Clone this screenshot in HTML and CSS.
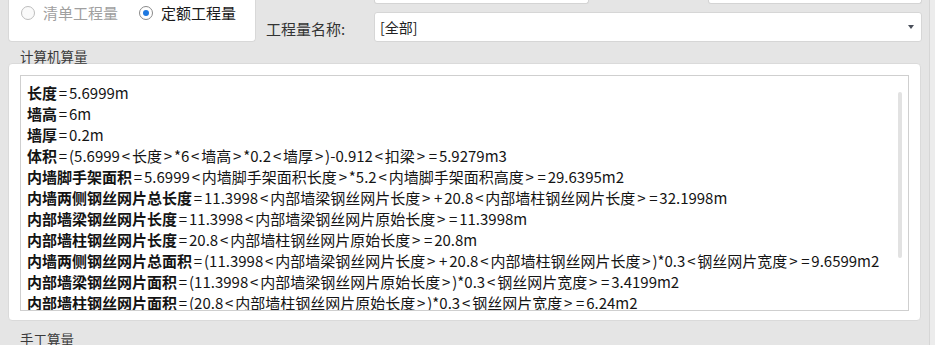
FILE: index.html
```html
<!DOCTYPE html>
<html lang="zh-CN">
<head>
    <meta charset="UTF-8">
    <title>工程量计算</title>
    <link rel="stylesheet" href="styles.css">
</head>
<body>
<div class="page">

    <div class="header">
        <div class="mode-panel">
            <span class="radio disabled"><span class="radio-dot"></span>清单工程量</span>
            <span class="radio checked"><span class="radio-dot"></span>定额工程量</span>
        </div>
        <div class="filters">
            <div class="stub-row">
                <div class="field-stub first"></div>
                <div class="field-stub second"></div>
            </div>
            <div class="filter-row">
                <span class="filter-label">工程量名称:</span>
                <div class="combo">
                    <span>[全部]</span>
                    <span class="combo-arrow"></span>
                </div>
            </div>
        </div>
    </div>

    <div class="group-title">计算机算量</div>
    <div class="group-panel">
        <div class="calc-box">
            <!-- operators get their own span: the original font draws < > = + wide -->
            <div class="calc-lines">
                <div><b>长度</b><i>=</i>5.6999m</div>
                <div><b>墙高</b><i>=</i>6m</div>
                <div><b>墙厚</b><i>=</i>0.2m</div>
                <div><b>体积</b><i>=</i>(5.6999<i>&lt;</i>长度<i>&gt;</i>*6<i>&lt;</i>墙高<i>&gt;</i>*0.2<i>&lt;</i>墙厚<i>&gt;</i>)-0.912<i>&lt;</i>扣梁<i>&gt;</i><i>=</i>5.9279m3</div>
                <div><b>内墙脚手架面积</b><i>=</i>5.6999<i>&lt;</i>内墙脚手架面积长度<i>&gt;</i>*5.2<i>&lt;</i>内墙脚手架面积高度<i>&gt;</i><i>=</i>29.6395m2</div>
                <div><b>内墙两侧钢丝网片总长度</b><i>=</i>11.3998<i>&lt;</i>内部墙梁钢丝网片长度<i>&gt;</i><i>+</i>20.8<i>&lt;</i>内部墙柱钢丝网片长度<i>&gt;</i><i>=</i>32.1998m</div>
                <div><b>内部墙梁钢丝网片长度</b><i>=</i>11.3998<i>&lt;</i>内部墙梁钢丝网片原始长度<i>&gt;</i><i>=</i>11.3998m</div>
                <div><b>内部墙柱钢丝网片长度</b><i>=</i>20.8<i>&lt;</i>内部墙柱钢丝网片原始长度<i>&gt;</i><i>=</i>20.8m</div>
                <div><b>内墙两侧钢丝网片总面积</b><i>=</i>(11.3998<i>&lt;</i>内部墙梁钢丝网片长度<i>&gt;</i><i>+</i>20.8<i>&lt;</i>内部墙柱钢丝网片长度<i>&gt;</i>)*0.3<i>&lt;</i>钢丝网片宽度<i>&gt;</i><i>=</i>9.6599m2</div>
                <div><b>内部墙梁钢丝网片面积</b><i>=</i>(11.3998<i>&lt;</i>内部墙梁钢丝网片原始长度<i>&gt;</i>)*0.3<i>&lt;</i>钢丝网片宽度<i>&gt;</i><i>=</i>3.4199m2</div>
                <div><b>内部墙柱钢丝网片面积</b><i>=</i>(20.8<i>&lt;</i>内部墙柱钢丝网片原始长度<i>&gt;</i>)*0.3<i>&lt;</i>钢丝网片宽度<i>&gt;</i><i>=</i>6.24m2</div>
            </div>
            <div class="scroll-thumb"></div>
        </div>
    </div>

    <div class="group-title manual">手工算量</div>
    <div class="group-panel bottom"></div>

</div>
</body>
</html>
```

FILE: styles.css
```css
html, body {
    margin: 0;
    padding: 0;
    height: 345px;
    overflow: hidden;
    background-color: #ececec;
}
body {
    font-family: "Noto Sans CJK SC", "Microsoft YaHei", sans-serif;
    font-size: 15px;
    color: #1b1b1b;
}
.page {
    width: 929px;
    height: 345px;
    border-right: 1px solid #d6d6d6;
    background-color: #e5e5e5;
}
.header {
    display: flex;
    height: 43px;
}
.mode-panel {
    margin-left: 8px;
    width: 248px;
    height: 42px;
    background: #fff;
    border: 1px solid #d8d8d8;
    border-top: none;
    border-radius: 0 0 4px 4px;
    display: flex;
    align-items: flex-start;
    gap: 21px;
    padding-left: 12px;
    box-sizing: border-box;
}
.radio {
    display: flex;
    align-items: center;
    gap: 8px;
    font-size: 15px;
    line-height: 26px;
    color: #1a1a1a;
}
.radio.disabled {
    color: #a0a0a0;
}
.radio-dot {
    width: 12px;
    height: 12px;
    border: 1px solid #bdbdbd;
    border-radius: 50%;
    background: #fafafa;
    display: flex;
    align-items: center;
    justify-content: center;
}
.radio.checked .radio-dot {
    border-color: #8a8a8a;
    background: #fff;
}
.radio.checked .radio-dot::after {
    content: "";
    width: 6px;
    height: 6px;
    border-radius: 50%;
    background: #1e78e0;
}
.filters {
    flex: 1;
    display: flex;
    flex-direction: column;
    padding-left: 10px;
}
.stub-row {
    display: flex;
    height: 12px;
    padding-left: 108px;
}
.field-stub {
    height: 3px;
    background: #fff;
    border: 1px solid #d4d4d4;
    border-top: none;
    border-radius: 0 0 3px 3px;
}
.field-stub.first {
    width: 213px;
}
.field-stub.second {
    width: 212px;
    margin-left: 119px;
}
.filter-row {
    display: flex;
    align-items: center;
}
.filter-label {
    width: 108px;
    font-size: 15px;
    color: #333;
    padding-top: 3px;
}
.combo {
    width: 548px;
    height: 30px;
    box-sizing: border-box;
    background: #fff;
    border: 1px solid #d6d6d6;
    border-radius: 3px;
    display: flex;
    align-items: center;
    justify-content: space-between;
    padding: 0 7px 0 5px;
    font-size: 14px;
    color: #222;
}
.combo-arrow {
    width: 0;
    height: 0;
    border-left: 3px solid transparent;
    border-right: 3px solid transparent;
    border-top: 4px solid #4a4f5a;
}
.group-title {
    margin-left: 20px;
    margin-top: 4px;
    font-size: 13.5px;
    line-height: 18px;
    color: #3a3a3a;
    height: 16px;
}
.group-panel {
    margin-left: 8px;
    width: 913px;
    height: 258px;
    box-sizing: border-box;
    background: #fff;
    border: 1px solid #dadada;
    border-radius: 4px;
    padding: 11px 11px 0 11px;
}
.calc-box {
    position: relative;
    height: 236px;
    border: 1px solid #cfcfcf;
    overflow: hidden;
    padding: 6px 0 0 6px;
    box-sizing: border-box;
}
.calc-lines div {
    line-height: 21px;
    white-space: nowrap;
    color: #141414;
}
.calc-lines b {
    font-weight: 700;
}
.calc-lines i {
    font-style: normal;
    display: inline-block;
    width: 12px;
    text-align: center;
}
.scroll-thumb {
    position: absolute;
    right: 6px;
    top: 16px;
    width: 4px;
    height: 166px;
    border-radius: 2px;
    background: #e2e2e2;
}
.group-title.manual {
    margin-top: 9px;
}
.group-panel.bottom {
    height: 40px;
    padding: 0;
}
```
